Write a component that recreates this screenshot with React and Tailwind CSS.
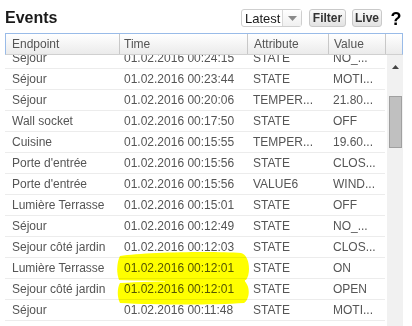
import React from 'react';

const rows = [
  { ep: 'Séjour', time: '01.02.2016 00:24:15', attr: 'STATE', val: 'NO_...' },
  { ep: 'Séjour', time: '01.02.2016 00:23:44', attr: 'STATE', val: 'MOTI...' },
  { ep: 'Séjour', time: '01.02.2016 00:20:06', attr: 'TEMPER...', val: '21.80...' },
  { ep: 'Wall socket', time: '01.02.2016 00:17:50', attr: 'STATE', val: 'OFF' },
  { ep: 'Cuisine', time: '01.02.2016 00:15:55', attr: 'TEMPER...', val: '19.60...' },
  { ep: "Porte d'entrée", time: '01.02.2016 00:15:56', attr: 'STATE', val: 'CLOS...' },
  { ep: "Porte d'entrée", time: '01.02.2016 00:15:56', attr: 'VALUE6', val: 'WIND...' },
  { ep: 'Lumière Terrasse', time: '01.02.2016 00:15:01', attr: 'STATE', val: 'OFF' },
  { ep: 'Séjour', time: '01.02.2016 00:12:49', attr: 'STATE', val: 'NO_...' },
  { ep: 'Sejour côté jardin', time: '01.02.2016 00:12:03', attr: 'STATE', val: 'CLOS...' },
  { ep: 'Lumière Terrasse', time: '01.02.2016 00:12:01', attr: 'STATE', val: 'ON' },
  { ep: 'Sejour côté jardin', time: '01.02.2016 00:12:01', attr: 'STATE', val: 'OPEN' },
  { ep: 'Séjour', time: '01.02.2016 00:11:48', attr: 'STATE', val: 'MOTI...' },
];

const Btn = ({ children, w }) => (
  <div className={`${w} h-[18px] flex items-center justify-center rounded-[3px] border border-[#c9c9c9] bg-gradient-to-b from-[#fafafa] to-[#e2e2e2] text-[12px] font-bold text-[#333] leading-none`}>
    {children}
  </div>
);

const App = () => {
  return (
    <div className="relative w-[412px] h-[326px] overflow-hidden bg-white font-['Liberation_Sans',Arial,sans-serif]">
      {/* top bar */}
      <div className="flex items-start h-[33px] pt-[9px] pl-[5px]">
        <h1 className="mt-[1px] text-[16px] leading-[16px] font-bold text-[#1a1a1a]">Events</h1>
        <div className="ml-auto flex items-start">
          <div className="w-[61px] h-[18px] flex rounded-[3px] border border-[#cfcfcf] bg-white">
            <div className="w-[40px] flex items-center pl-[3px] text-[13px] leading-none text-[#1a1a1a]">Latest</div>
            <div className="flex-1 flex items-center justify-center border-l border-[#d8d8d8] bg-gradient-to-b from-white to-[#f0f0f0]">
              <svg width="9" height="5" viewBox="0 0 9 5"><path d="M0 0h9L4.5 5z" fill="#8a8a8a" /></svg>
            </div>
          </div>
          <div className="ml-[7px]"><Btn w="w-[37px]">Filter</Btn></div>
          <div className="ml-[6px]"><Btn w="w-[30px]">Live</Btn></div>
          <div className="w-[30px] flex justify-center pl-[4px] pr-[6px]">
            <span className="mt-[1px] text-[18px] leading-[18px] font-bold text-black">?</span>
          </div>
        </div>
      </div>

      {/* grid header */}
      <div className="ml-[5px] w-[398px] h-[22px] flex border border-[#99bbe8] border-b-[#d0d0d0] bg-gradient-to-b from-white to-[#ebebeb] text-[12px] text-[#555]">
        <div className="w-[114px] flex items-center pl-[6px] border-r border-[#c8c8c8]">Endpoint</div>
        <div className="w-[128px] flex items-center pl-[4px] border-r border-[#c8c8c8]">Time</div>
        <div className="w-[81px] flex items-center pl-[6px] border-r border-[#c8c8c8]">Attribute</div>
        <div className="w-[57px] flex items-center pl-[5px] border-r border-[#c8c8c8]">Value</div>
        <div className="flex-1" />
      </div>

      {/* grid body */}
      <div className="ml-[5px] w-[398px] flex h-[280px]">
        <div className="w-[380px] overflow-hidden">
          <div className="-mt-[7px]">
            {rows.map((r, i) => (
              <div key={i} className="h-[21px] flex items-center border-b border-[#ececec] text-[12px] text-[#555] whitespace-nowrap">
                <div className="w-[114px] pl-[7px]">{r.ep}</div>
                <div className="w-[128px] pl-[5px]">{r.time}</div>
                <div className="w-[81px] pl-[6px]">{r.attr}</div>
                <div className="w-[57px] pl-[5px]">{r.val}</div>
              </div>
            ))}
          </div>
        </div>
        <div className="ml-[2px] w-[16px] bg-[#f1f1f1] flex flex-col items-center">
          <svg className="mt-[10px]" width="7" height="4" viewBox="0 0 7 4"><path d="M3.5 0L7 4H0z" fill="#444" /></svg>
          <div className="mt-[27px] ml-[1px] w-[13px] h-[52px] bg-[#c0c0c0] border border-[#a0a0a0]" />
        </div>
      </div>

      {/* marker highlight */}
      <svg className="absolute left-[115px] top-[251px] mix-blend-multiply" width="138" height="56" viewBox="0 0 138 56">
        <path d="M5 5 C30 1 100 0 126 2 C135 4 136 23 131 29 C100 31 40 30 4 29 C1 21 2 11 5 5 Z" fill="#ffff00" />
        <path d="M5 32 C40 30 100 30 128 29 C136 34 135 48 129 52 C100 54 40 54 5 52 C2 46 2 37 5 32 Z" fill="#ffff00" />
        <path d="M50 20 L129 20 L131 40 L50 40 Z" fill="#ffff00" />
      </svg>
    </div>
  );
};

export default App;
